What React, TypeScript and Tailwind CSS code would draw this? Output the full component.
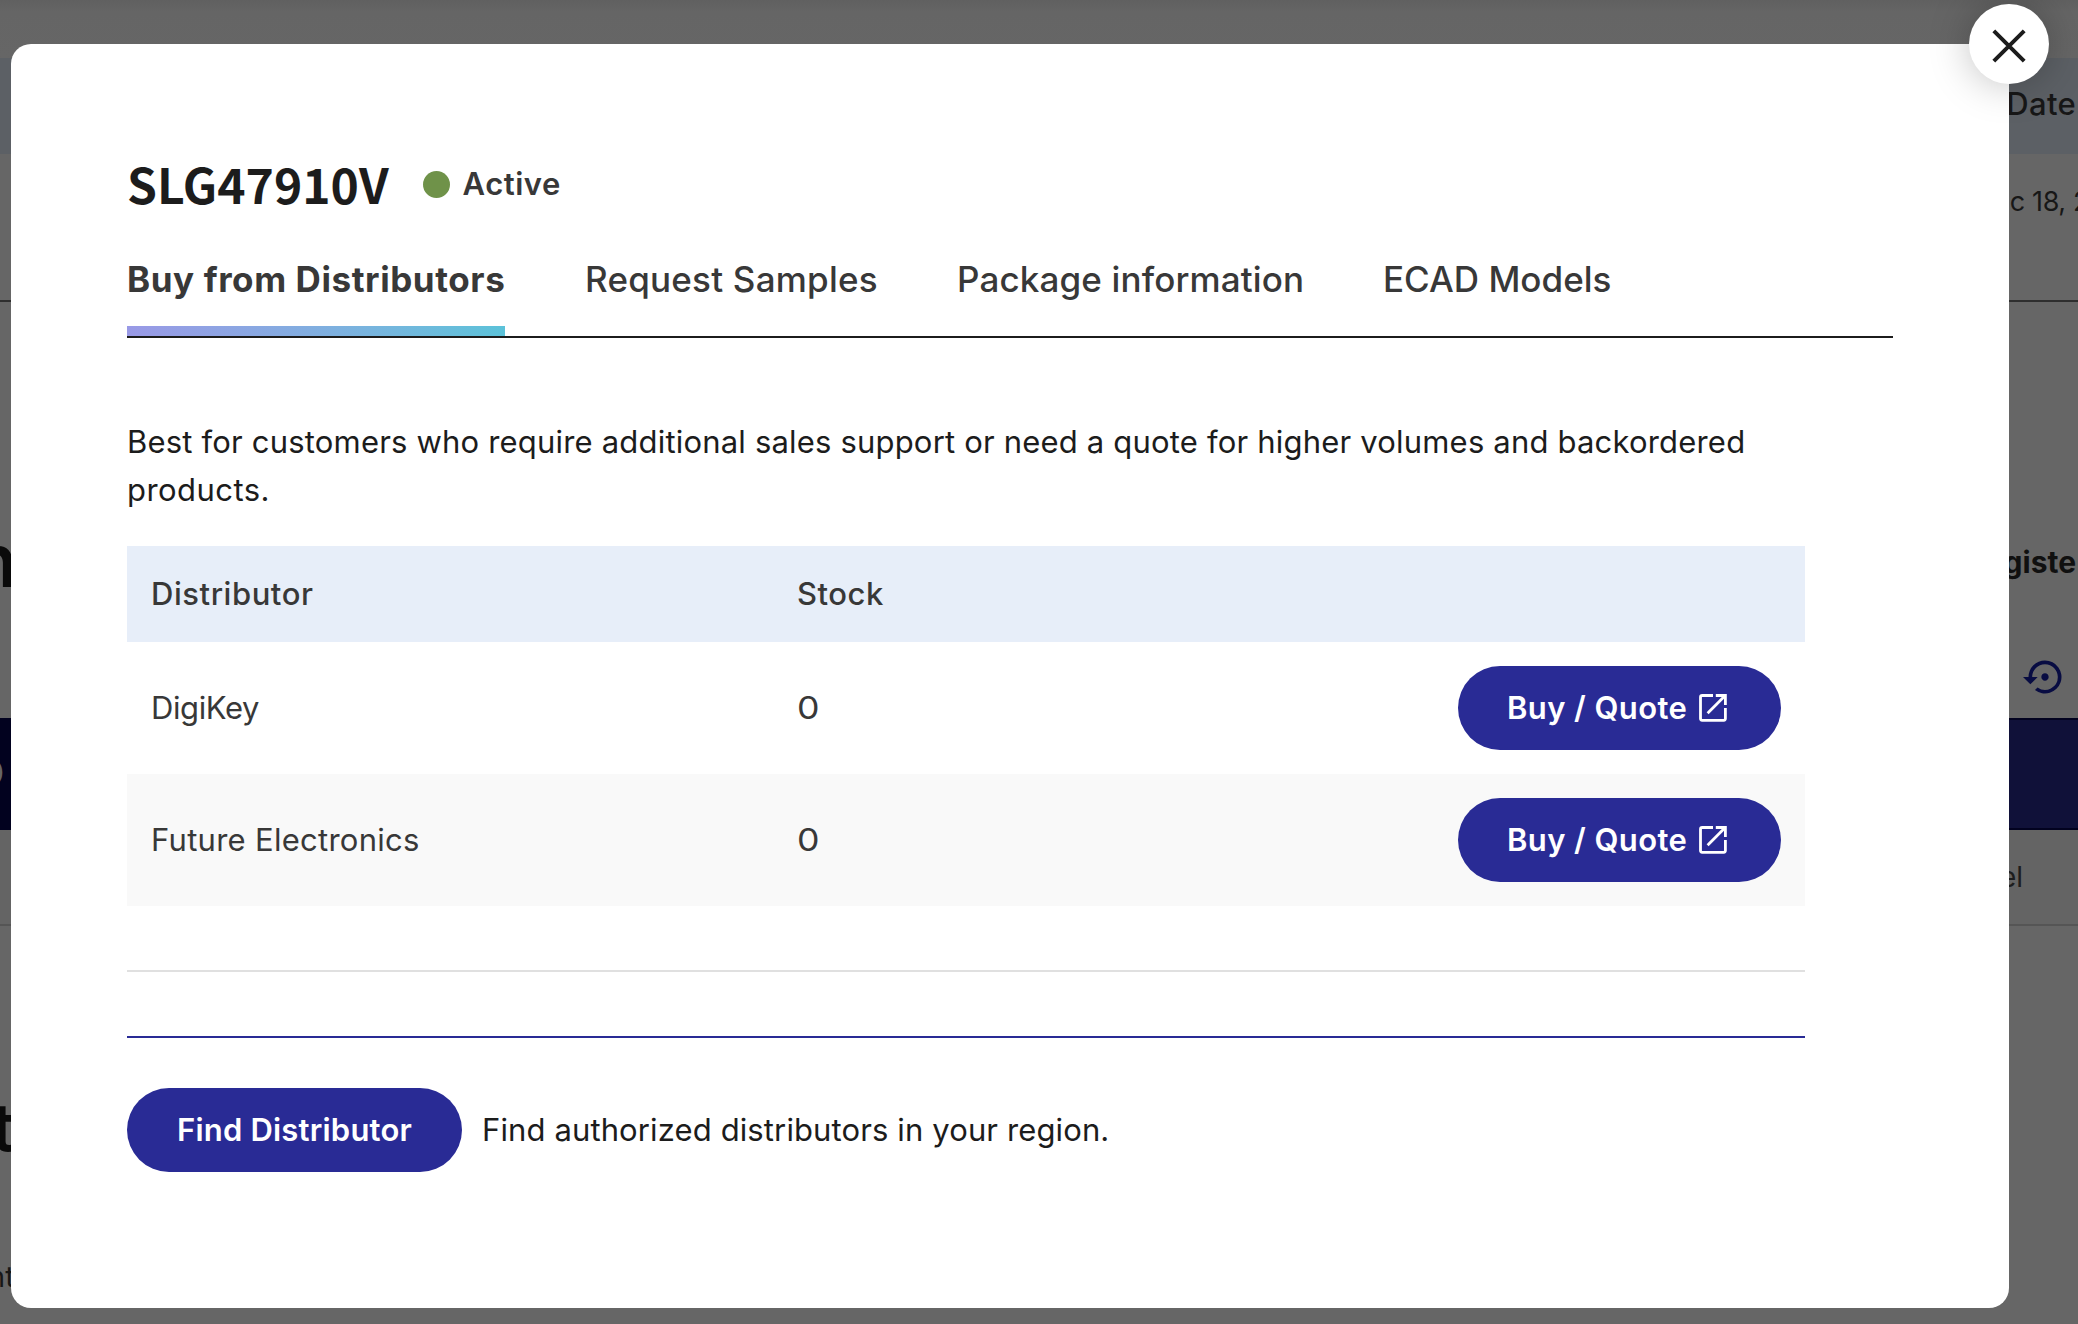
import React from "react";
import { MdSettingsBackupRestore } from "react-icons/md";

const distributors = [
  { name: "DigiKey", stock: 0, tracking: "tracking-[-0.4px]", row: "bg-white" },
  { name: "Future Electronics", stock: 0, tracking: "tracking-[0.28px]", row: "bg-[#f9f9f9]" },
];

const tabs = [
  { label: "Buy from Distributors", style: "font-bold tracking-[0.58px] w-[378px]", active: true },
  { label: "Request Samples", style: "font-medium tracking-[0.22px] w-[292px]", active: false },
  { label: "Package information", style: "font-medium tracking-[0.14px] w-[346px]", active: false },
  { label: "ECAD Models", style: "font-medium w-[230px]", active: false },
];

function ExternalLinkIcon() {
  return (
    <svg width="28" height="28" viewBox="0 0 28 28" fill="none" className="ml-[12px] shrink-0" stroke="currentColor" strokeWidth="2.8">
      <path d="M14 1.5H3.2Q1.5 1.5 1.5 3.2V24.6Q1.5 26.3 3.2 26.3H24.7Q26.4 26.3 26.4 24.6V14" />
      <path d="M16.8 1.5H26.4V11" />
      <path d="M8.6 19.2L26 1.8" />
    </svg>
  );
}

function BuyButton() {
  return (
    <button className="flex h-[84px] w-[323px] items-center rounded-full bg-[#292b95] pl-[49px] text-[31px] font-semibold tracking-[0.4px] text-white">
      Buy / Quote
      <ExternalLinkIcon />
    </button>
  );
}

function PageBehind() {
  return (
    <div className="flex h-full w-full flex-col overflow-hidden whitespace-nowrap">
      <div className="h-[58px] shrink-0 bg-linear-to-b from-[#606060] via-[#656565] via-20% to-[#666666]" />
      <div className="flex h-24 shrink-0 justify-end bg-[#5c6065] pr-[2px] text-[31px] leading-[40px] font-medium text-[#171717]">
        <span className="pt-[26px] tracking-[0.3px]">Date</span>
      </div>
      <div className="flex h-[148px] shrink-0 justify-end border-b-2 border-[#2e2e2e] text-[27px] text-[#171717]">
        <span className="-mr-[11px] pt-[28px] leading-[40px] tracking-[-0.4px]">c 18, 2</span>
      </div>
      <div className="flex h-[416px] shrink-0 justify-between">
        <div className="-ml-[28px] pt-[218px] text-[74px] font-semibold leading-[80px] text-[#0a0a0a]">n</div>
        <div className="flex w-[80px] flex-col">
          <span className="pt-[240px] pr-[2px] text-right text-[30px] font-bold leading-[40px] text-[#101010]">giste</span>
          <MdSettingsBackupRestore className="mt-[73px] ml-[25px] size-[44px] shrink-0 text-[#080c42]" />
        </div>
      </div>
      <div className="flex h-28 shrink-0 bg-[#02021f]">
        <span className="-ml-[26px] w-[37px] pt-[31px] text-[40px] leading-[48px] text-[#666666]">O</span>
        <div className="my-[2px] flex-1 bg-[#101139]" />
      </div>
      <div className="flex h-24 shrink-0 justify-end border-b-2 border-[#555555] bg-[#646464] text-[28px] leading-[40px] text-[#1d1d1d]">
        <span className="pt-[27px] pr-[55px]">el</span>
      </div>
      <div className="-ml-[9px] pt-[161px] text-[68px] font-semibold leading-[80px] text-[#0a0a0a]">t</div>
      <div className="-ml-[12px] pt-[90px] text-[29px] leading-[40px] text-[#171717]">nt</div>
    </div>
  );
}

export default function App() {
  return (
    <main className="relative h-[1324px] w-[2078px] overflow-hidden bg-[#666666] font-['Inter',sans-serif]">
      <PageBehind />

      <section className="absolute top-[44px] left-[11px] flex h-[1264px] w-[1998px] flex-col rounded-[20px] bg-white pt-[111px] pr-[116px] pl-[116px] text-[#1c1c1c]">
        <header className="flex h-14 items-center">
          <h1 className="font-['Noto_Sans_CJK_JP',sans-serif] text-[48px] leading-[56px] font-bold">SLG47910V</h1>
          <span className="mt-[2px] ml-[34px] size-[27px] rounded-full bg-[#6f9249]" />
          <span className="mt-[2px] ml-[13px] text-[31px] font-semibold tracking-[0.5px] text-[#383838]">Active</span>
        </header>

        <nav className="mt-11 flex gap-20 border-b-2 border-[#1c1c1c] text-[35px] leading-[48px] whitespace-nowrap text-[#383838]">
          {tabs.map((tab) => (
            <div key={tab.label} className={tab.style}>
              <div className="h-[71px]">{tab.label}</div>
              <div className={tab.active ? "h-[10px] bg-linear-to-r from-[#9999e6] to-[#5bc2d9]" : "h-[10px]"} />
            </div>
          ))}
        </nav>

        <p className="mt-20 text-[31px] leading-[48px] tracking-[0.188px] whitespace-nowrap">
          Best for customers who require additional sales support or need a quote for higher volumes and backordered
          <br />
          <span className="tracking-[0.45px]">products.</span>
        </p>

        <div className="mt-8 flex w-[1678px] flex-col text-[31px] text-[#383838]">
          <div className="grid h-24 grid-cols-[646px_1fr] items-center bg-[#e7eef9] px-6 font-medium">
            <span className="tracking-[0.55px]">Distributor</span>
            <span className="tracking-[0.5px]">Stock</span>
          </div>
          {distributors.map((d) => (
            <div key={d.name} className={`grid h-[132px] grid-cols-[646px_1fr_auto] items-center px-6 ${d.row}`}>
              <span className={d.tracking}>{d.name}</span>
              <span className="origin-left scale-x-115">{d.stock}</span>
              <BuyButton />
            </div>
          ))}
          <div className="h-[66px] border-b-2 border-[#e0e0e0]" />
          <div className="h-[66px] border-b-2 border-[#292b95]" />
        </div>

        <div className="mt-[50px] flex items-center text-[31px]">
          <button className="h-[84px] w-[335px] rounded-full bg-[#292b95] font-semibold tracking-[0.2px] text-white">
            Find Distributor
          </button>
          <span className="ml-[20px] tracking-[0.12px]">Find authorized distributors in your region.</span>
        </div>
      </section>

      <button
        aria-label="Close"
        className="absolute top-[4px] left-[1969px] flex size-20 items-center justify-center rounded-full bg-white shadow-[0_0_40px_rgba(0,0,0,0.25)]"
      >
        <svg width="34" height="34" viewBox="0 0 34 34" className="mt-[4px] -ml-px" stroke="#1c1c1c" strokeWidth="4">
          <path d="M1.8 1.8L32.2 32.2M32.2 1.8L1.8 32.2" />
        </svg>
      </button>
    </main>
  );
}
